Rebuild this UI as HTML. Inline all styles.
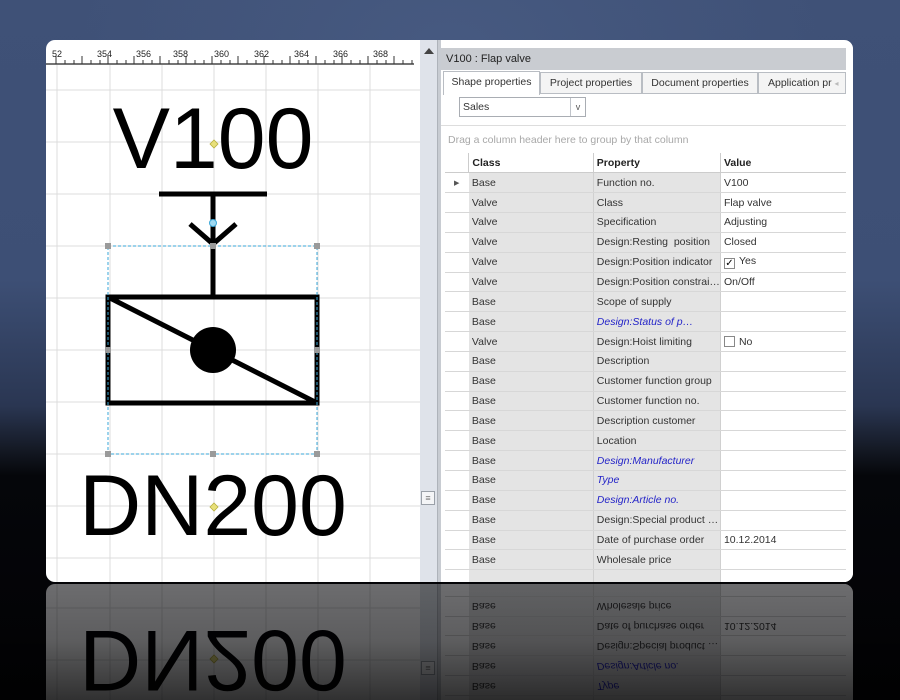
<!DOCTYPE html>
<html style="width:900px;height:700px;overflow:hidden"><head><meta charset="utf-8">
<style>
*{margin:0;padding:0;box-sizing:border-box}
body{width:900px;height:700px;overflow:hidden;position:relative;font-family:"Liberation Sans",sans-serif;
background:linear-gradient(180deg,#3f5177 0%,#3d4f75 40%,#2a3652 58%,#151a26 64%,#05060a 68%,#020204 100%);}
.glow{position:absolute;left:0;top:0;width:900px;height:460px;background:radial-gradient(ellipse 60% 70% at 50% 10%,rgba(80,100,140,.45),rgba(0,0,0,0) 70%)}
.panel{position:absolute;left:46px;top:40px;width:807px;height:542px;background:#fff;border-radius:9px;overflow:hidden}
.rw{position:absolute;left:46px;top:584px;width:807px;height:116px;overflow:hidden;opacity:.42}
.rin{position:absolute;left:0;top:0;width:807px;height:542px;transform-origin:0 0;transform:translateY(542px) scaleY(-1)}
.rin .panel{left:0;top:0}
.fade{position:absolute;left:0;top:582px;width:900px;height:118px;background:linear-gradient(180deg,rgba(0,0,0,0) 0%,rgba(0,0,0,.15) 50%,rgba(0,0,0,.55) 100%)}
.sb{position:absolute;left:374px;top:0;width:17px;height:542px;background:#dfe3ea}
.sep{position:absolute;left:391px;top:0;width:4px;height:542px;background:#c8ccd2;border-left:1px solid #aeb3ba}
.rp{position:absolute;left:395px;top:8px;width:405px;height:534px;background:#fff;font-size:10.5px;color:#333}
.title{position:absolute;left:0;top:0;width:405px;height:22px;background:#c9ccd1;font-size:11px;line-height:22px;padding-left:5px;color:#222}
.tab{position:absolute;top:24px;height:22px;border:1px solid #b9bdc3;line-height:20px;text-align:center;font-size:10.5px;background:#f4f4f4}
.dd{position:absolute;left:18px;top:49px;width:127px;height:20px;border:1px solid #a9adb3;line-height:18px;padding-left:3px;font-size:10.5px}
.dd span{position:absolute;right:0;top:0;width:15px;height:18px;border-left:1px solid #c0c4ca;text-align:center;font-size:9px;color:#555}
.grp{position:absolute;left:0;top:77px;width:405px;height:28px;line-height:28px;padding-left:7px;color:#a8a8a8;font-size:10.5px;border-top:1px solid #ddd}
table{position:absolute;left:4px;top:105px;border-collapse:collapse;font-size:10.5px}
td{height:19.85px;padding-left:3px;border-bottom:1px solid #d7d7d7;white-space:nowrap;overflow:hidden}
td.i{width:24px;background:#fff}
td.c{width:125px;background:#e4e4e4;border-right:1px solid #d0d0d0}
td.p{width:126px;background:#e4e4e4;border-right:1px solid #d0d0d0}
td.v{width:126px;background:#fff}
tr.h td{font-weight:bold;background:#fff;color:#222;border-bottom:1px solid #ccc;border-right:1px solid #ccc}
.bl{color:#2424c8;font-style:italic}
.cb{display:inline-block;width:11px;height:11px;border:1px solid #888;vertical-align:-2px;margin-right:4px;font-size:10px;line-height:9px;text-align:center;color:#000}
</style></head><body>
<div class="glow"></div>

<div class="panel" id="P">
  <svg width="374" height="542" style="position:absolute;left:0;top:0">
    <g stroke="#dcdcdc" stroke-width="1">
      <line x1="11" y1="25" x2="11" y2="542"/><line x1="64" y1="25" x2="64" y2="542"/><line x1="116" y1="25" x2="116" y2="542"/><line x1="168" y1="25" x2="168" y2="542"/><line x1="220" y1="25" x2="220" y2="542"/><line x1="272" y1="25" x2="272" y2="542"/><line x1="324" y1="25" x2="324" y2="542"/>
      <line x1="0" y1="50" x2="374" y2="50"/><line x1="0" y1="102" x2="374" y2="102"/><line x1="0" y1="154" x2="374" y2="154"/><line x1="0" y1="206" x2="374" y2="206"/><line x1="0" y1="258" x2="374" y2="258"/><line x1="0" y1="310" x2="374" y2="310"/><line x1="0" y1="362" x2="374" y2="362"/><line x1="0" y1="414" x2="374" y2="414"/><line x1="0" y1="466" x2="374" y2="466"/><line x1="0" y1="518" x2="374" y2="518"/>
    </g>
    <line x1="0" y1="24" x2="368" y2="24" stroke="#222" stroke-width="1.2"/>
    <g stroke="#333" stroke-width="1">
      <path d="M10 24v-8M19 24v-4M28 24v-4M36 24v-8M45 24v-4M54 24v-4M62 24v-8M71 24v-4M80 24v-4M88 24v-8M97 24v-4M106 24v-4M114 24v-8M123 24v-4M132 24v-4M140 24v-8M149 24v-4M158 24v-4M166 24v-8M175 24v-4M184 24v-4M192 24v-8M201 24v-4M210 24v-4M218 24v-8M227 24v-4M236 24v-4M244 24v-8M253 24v-4M262 24v-4M270 24v-8M279 24v-4M288 24v-4M296 24v-8M305 24v-4M314 24v-4M322 24v-8M331 24v-4M340 24v-4M348 24v-8M357 24v-4M366 24v-4"/>
    </g>
    <g font-size="9" fill="#222" font-family="Liberation Sans">
      <text x="6" y="17">52</text><text x="51" y="17">354</text><text x="90" y="17">356</text><text x="127" y="17">358</text><text x="168" y="17">360</text><text x="208" y="17">362</text><text x="248" y="17">364</text><text x="287" y="17">366</text><text x="327" y="17">368</text>
    </g>
    <text x="167" y="128" font-size="86" text-anchor="middle" font-family="Liberation Sans" fill="#000">V100</text>
    <text x="167" y="495" font-size="86" text-anchor="middle" font-family="Liberation Sans" fill="#000">DN200</text>
    <path d="M164 104l4-4 4 4-4 4z" fill="#e8e07a" stroke="#b8b040" stroke-width=".8"/>
    <path d="M164 467l4-4 4 4-4 4z" fill="#e8e07a" stroke="#b8b040" stroke-width=".8"/>
    <g stroke="#000" stroke-width="5" fill="none">
      <line x1="113" y1="154" x2="221" y2="154"/>
      <line x1="167" y1="154" x2="167" y2="257"/>
      <path d="M144 184L167 204L190 184"/>
      <rect x="62" y="257" width="209" height="106"/>
      <line x1="62" y1="257" x2="271" y2="363"/>
    </g>
    <circle cx="167" cy="310" r="23" fill="#000"/>
    <rect x="62" y="206" width="209" height="208" fill="none" stroke="#3aa7d8" stroke-width="1" stroke-dasharray="3,2"/>
    <g fill="#9a9a9a"><rect x="59" y="203" width="6" height="6"/><rect x="164" y="203" width="6" height="6"/><rect x="268" y="203" width="6" height="6"/><rect x="59" y="307" width="6" height="6"/><rect x="268" y="307" width="6" height="6"/><rect x="59" y="411" width="6" height="6"/><rect x="164" y="411" width="6" height="6"/><rect x="268" y="411" width="6" height="6"/></g>
    <circle cx="167" cy="183" r="3.5" fill="#9fd8f0" stroke="#3aa7d8"/>
  </svg>
  <div class="sb"><div style="position:absolute;left:4px;top:8px;width:0;height:0;border-left:5px solid transparent;border-right:5px solid transparent;border-bottom:6px solid #444"></div>
    <div style="position:absolute;left:1px;top:451px;width:14px;height:14px;border:1px solid #9aa0a8;background:#f4f5f7;font-size:9px;line-height:12px;text-align:center;color:#777">≡</div></div>
  <div class="sep"></div>
  <div class="rp">
    <div class="title">V100 : Flap valve</div>
    <div class="tab" style="left:2px;width:97px;background:#fff;border-bottom:none;height:24px;top:23px">Shape properties</div>
    <div class="tab" style="left:99px;width:102px">Project properties</div>
    <div class="tab" style="left:201px;width:116px">Document properties</div>
    <div class="tab" style="left:317px;width:88px;text-align:left;padding-left:9px">Application pr <span style="color:#bbb;font-size:8px">◂</span></div>
    <div class="dd">Sales<span>v</span></div>
    <div class="grp">Drag a column header here to group by that column</div>
    <table>
      <tr class="h"><td class="i"></td><td class="c">Class</td><td class="p">Property</td><td class="v" style="border-right:none">Value</td></tr>
      <tr><td class="i" style="font-size:7px;color:#555;padding-left:9px">▶</td><td class="c">Base</td><td class="p">Function no.</td><td class="v">V100</td></tr>
      <tr><td class="i"></td><td class="c">Valve</td><td class="p">Class</td><td class="v">Flap valve</td></tr>
      <tr><td class="i"></td><td class="c">Valve</td><td class="p">Specification</td><td class="v">Adjusting</td></tr>
      <tr><td class="i"></td><td class="c">Valve</td><td class="p">Design:Resting&nbsp; position</td><td class="v">Closed</td></tr>
      <tr><td class="i"></td><td class="c">Valve</td><td class="p">Design:Position indicator</td><td class="v"><span class="cb">✓</span>Yes</td></tr>
      <tr><td class="i"></td><td class="c">Valve</td><td class="p">Design:Position constrai…</td><td class="v">On/Off</td></tr>
      <tr><td class="i"></td><td class="c">Base</td><td class="p">Scope of supply</td><td class="v"></td></tr>
      <tr><td class="i"></td><td class="c">Base</td><td class="p bl">Design:Status of p…</td><td class="v"></td></tr>
      <tr><td class="i"></td><td class="c">Valve</td><td class="p">Design:Hoist limiting</td><td class="v"><span class="cb"></span>No</td></tr>
      <tr><td class="i"></td><td class="c">Base</td><td class="p">Description</td><td class="v"></td></tr>
      <tr><td class="i"></td><td class="c">Base</td><td class="p">Customer function group</td><td class="v"></td></tr>
      <tr><td class="i"></td><td class="c">Base</td><td class="p">Customer function no.</td><td class="v"></td></tr>
      <tr><td class="i"></td><td class="c">Base</td><td class="p">Description customer</td><td class="v"></td></tr>
      <tr><td class="i"></td><td class="c">Base</td><td class="p">Location</td><td class="v"></td></tr>
      <tr><td class="i"></td><td class="c">Base</td><td class="p bl">Design:Manufacturer</td><td class="v"></td></tr>
      <tr><td class="i"></td><td class="c">Base</td><td class="p bl">Type</td><td class="v"></td></tr>
      <tr><td class="i"></td><td class="c">Base</td><td class="p bl">Design:Article no.</td><td class="v"></td></tr>
      <tr><td class="i"></td><td class="c">Base</td><td class="p">Design:Special product …</td><td class="v"></td></tr>
      <tr><td class="i"></td><td class="c">Base</td><td class="p">Date of purchase order</td><td class="v">10.12.2014</td></tr>
      <tr><td class="i"></td><td class="c">Base</td><td class="p">Wholesale price</td><td class="v"></td></tr>
      <tr><td class="i"></td><td class="c"></td><td class="p"></td><td class="v"></td></tr>
    </table>
  </div>
  <div style="position:absolute;left:800px;top:0;width:7px;height:542px;background:#fff"></div>
</div>

<div class="rw"><div class="rin" id="R"></div></div>
<div class="fade"></div>
<script>
document.getElementById('R').innerHTML=document.getElementById('P').outerHTML.replace('id="P"','');
</script>
</body></html>
